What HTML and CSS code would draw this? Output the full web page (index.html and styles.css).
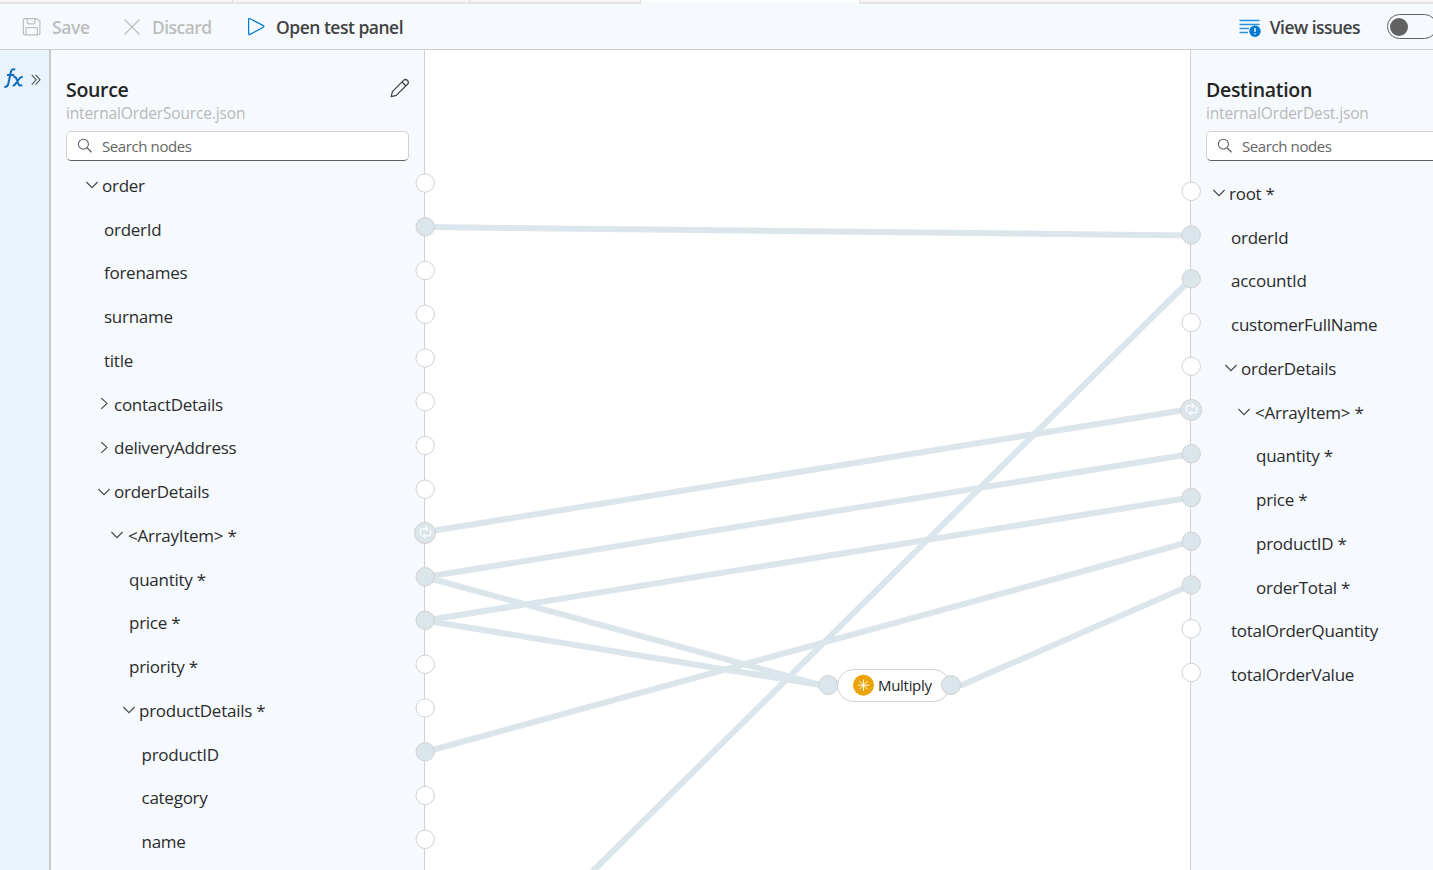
FILE: index.html
```html
<!DOCTYPE html>
<html lang="en">
<head>
<meta charset="utf-8">
<title>Data mapper</title>
<link rel="stylesheet" href="styles.css">
</head>
<body>
<svg class="defs" width="0" height="0">
  <symbol id="down" viewBox="0 0 12 12"><path d="M0.4 3 6 8.7 11.6 3" fill="none" stroke="#484644" stroke-width="1.1"/></symbol>
  <symbol id="right" viewBox="0 0 12 12"><path d="M3.2 0 9 5.4 3.2 10.8" fill="none" stroke="#484644" stroke-width="1.1"/></symbol>
  <symbol id="search" viewBox="0 0 16 16"><circle cx="6.4" cy="6.2" r="5" fill="none" stroke="#616161" stroke-width="1.1"/><path d="M10 9.8 14.6 14.3" stroke="#616161" stroke-width="1.2"/></symbol>
  <symbol id="loop" viewBox="0 0 14 14"><path d="M8.5 2.9H4.3Q1.3 2.9 1.3 5.8V7.4Q1.3 8.8 2.5 9.7M5.5 10.7H9.7Q12.7 10.7 12.7 7.8V6.2Q12.7 4.8 11.5 3.9M7.3 .6 9.6 2.9 7.3 5.2M6.7 8.4 4.4 10.7 6.7 13" fill="none" stroke="#fff" stroke-width="1.3"/></symbol>
</svg>
<div class="app">
  <div class="tabs"><i class="tab t1"></i><i class="tab t2"></i><i class="tab t3"></i><i class="tab active"></i><i class="tab rest"></i></div>
  <header class="toolbar">
    <button class="cmd save disabled"><svg width="20" height="20" viewBox="0 0 20 20" fill="none" stroke="#bdbdbd" stroke-width="1.2"><path d="M3.2 1.6H14.6L17.9 4.6V15.8Q17.9 17.9 15.8 17.9H3.4Q1.3 17.9 1.3 15.8V3.5Q1.3 1.6 3.2 1.6ZM5.2 1.6V5.8Q5.2 6.8 6.2 6.8H12Q13 6.8 13 5.8V1.6M4 17.9V11.6Q4 10.6 5 10.6H14.3Q15.3 10.6 15.3 11.6V17.9"/></svg><span>Save</span></button>
    <button class="cmd discard disabled"><svg width="16" height="16" viewBox="0 0 16 16" stroke="#bdbdbd" stroke-width="1.2"><path d="M.5 .5 15.5 15.5M15.5 .5 .5 15.5"/></svg><span>Discard</span></button>
    <button class="cmd test"><svg width="18" height="20" viewBox="0 0 18 20" fill="none" stroke="#0078d4" stroke-width="1.2" stroke-linejoin="round"><path d="M1.6 2.6Q1.6 1 3.1 1.7L16.3 8.6Q17.4 9.4 16.3 10.2L3.1 17.4Q1.6 18 1.6 16.4Z"/></svg><span>Open test panel</span></button>
    <button class="cmd issues"><svg width="23" height="20" viewBox="0 0 23 20"><path d="M.5 3.5H20.5M.5 7.5H20.5M.5 11.5H10M.5 15.5H9" stroke="#2b91df" stroke-width="1.4"/><circle cx="16" cy="14.2" r="5.7" fill="#0078d4"/><path d="M16 11V15M16 16.2V17.6" stroke="#fff" stroke-width="1.4"/></svg><span>View issues</span></button>
    <span class="toggle"><i></i></span>
  </header>
  <main class="body">
    <nav class="rail">
      <svg width="20" height="22" viewBox="0 0 20 22" fill="none" stroke="#0f6cbd" stroke-width="2"><path d="M.3 18.8Q3.4 19.4 4.3 15.8L6.8 4.2Q7.5 .6 11.2 1.4M3 7H10.3M9.4 9Q11.6 8.2 12.6 11.2L14.3 15.8Q15 18.2 18.3 17.4M18.7 9Q17 8.6 15.4 10.5L11.5 15.8Q10.3 18 8.7 17.4"/></svg>
      <svg width="10" height="12" viewBox="0 0 10 12" fill="none" stroke="#555" stroke-width="1.1"><path d="M.8 .9 5.2 5.8 .8 10.7M4.6 .9 9 5.8 4.6 10.7"/></svg>
    </nav>
    <section class="panel source">
      <div class="head"><h2 class="title t-source">Source</h2><svg width="20" height="20" viewBox="0 0 20 20" fill="none" stroke="#424242" stroke-width="1.25" stroke-linejoin="round"><path d="M1.2 18.7 2.4 13.6 13.5 2.4Q15.4 .6 17.3 2.3 19.3 4.3 17.5 6.3L6.3 17.4ZM12 4 16 8"/></svg></div>
      <p class="file f-source">internalOrderSource.json</p>
      <div class="search"><svg width="16" height="16"><use href="#search"/></svg><span>Search nodes</span></div>
      <div class="tree">
        <div class="row s0"><svg width="12" height="12"><use href="#down"/></svg><span>order</span></div>
        <div class="row s1"><span>orderId</span></div>
        <div class="row s1"><span>forenames</span></div>
        <div class="row s1"><span>surname</span></div>
        <div class="row s1"><span>title</span></div>
        <div class="row s1 branch"><svg width="12" height="12"><use href="#right"/></svg><span>contactDetails</span></div>
        <div class="row s1 branch"><svg width="12" height="12"><use href="#right"/></svg><span>deliveryAddress</span></div>
        <div class="row s1 branch"><svg width="12" height="12"><use href="#down"/></svg><span>orderDetails</span></div>
        <div class="row s2 branch array"><svg width="12" height="12"><use href="#down"/></svg><span>&lt;ArrayItem&gt; *</span></div>
        <div class="row s2"><span>quantity *</span></div>
        <div class="row s2"><span>price *</span></div>
        <div class="row s2"><span>priority *</span></div>
        <div class="row s3 branch"><svg width="12" height="12"><use href="#down"/></svg><span>productDetails *</span></div>
        <div class="row s3"><span>productID</span></div>
        <div class="row s3"><span>category</span></div>
        <div class="row s3"><span>name</span></div>
      </div>
    </section>
    <section class="canvas"></section>
    <section class="panel dest">
      <div class="head"><h2 class="title t-dest">Destination</h2></div>
      <p class="file f-dest">internalOrderDest.json</p>
      <div class="search"><svg width="16" height="16"><use href="#search"/></svg><span>Search nodes</span></div>
      <div class="tree">
        <div class="row d0"><svg width="12" height="12"><use href="#down"/></svg><span>root *</span></div>
        <div class="row d1"><span>orderId</span></div>
        <div class="row d1"><span>accountId</span></div>
        <div class="row d1"><span>customerFullName</span></div>
        <div class="row d1 branch"><svg width="12" height="12"><use href="#down"/></svg><span>orderDetails</span></div>
        <div class="row d2 branch array"><svg width="12" height="12"><use href="#down"/></svg><span>&lt;ArrayItem&gt; *</span></div>
        <div class="row d2"><span>quantity *</span></div>
        <div class="row d2"><span>price *</span></div>
        <div class="row d2"><span>productID *</span></div>
        <div class="row d2"><span>orderTotal *</span></div>
        <div class="row d1"><span>totalOrderQuantity</span></div>
        <div class="row d1"><span>totalOrderValue</span></div>
      </div>
    </section>
  </main>
  <svg class="wires" width="1433" height="870" viewBox="0 0 1433 870">
    <g class="wire">
      <path d="M425 227 1191 235.5M1191 279 592 872M425 532 1191 409M425 577 1191 454M425 620.5 1191 497.5M425 577 820 685H828M425 620.5 820 685H828M425 752 1191 541.5M951 685H962L1191 585"/>
    </g>
    <g class="port">
      <circle cx="425.2" cy="183" r="9.2"/><circle cx="425.2" cy="270.5" r="9.2"/><circle cx="425.2" cy="314.3" r="9.2"/><circle cx="425.2" cy="358" r="9.2"/><circle cx="425.2" cy="401.8" r="9.2"/><circle cx="425.2" cy="445.5" r="9.2"/><circle cx="425.2" cy="489.2" r="9.2"/><circle cx="425.2" cy="664.3" r="9.2"/><circle cx="425.2" cy="708" r="9.2"/><circle cx="425.2" cy="795.5" r="9.2"/><circle cx="425.2" cy="839.3" r="9.2"/>
      <circle cx="1191.2" cy="191.3" r="9.2"/><circle cx="1191.2" cy="322.5" r="9.2"/><circle cx="1191.2" cy="366.3" r="9.2"/><circle cx="1191.2" cy="628.8" r="9.2"/><circle cx="1191.2" cy="672.5" r="9.2"/>
    </g>
    <rect x="837.5" y="669.5" width="112" height="32" rx="16" fill="#fff" stroke="#d1d1d1"/>
    <g class="port linked">
      <circle cx="425.2" cy="226.8" r="9.2"/><circle cx="425" cy="533" r="10.5"/><circle cx="425.2" cy="576.8" r="9.2"/><circle cx="425.2" cy="620.3" r="9.2"/><circle cx="425.2" cy="751.8" r="9.2"/>
      <circle cx="1191.2" cy="235" r="9.2"/><circle cx="1191.2" cy="278.8" r="9.2"/><circle cx="1191.2" cy="410" r="10.5"/><circle cx="1191.2" cy="453.8" r="9.2"/><circle cx="1191.2" cy="497.5" r="9.2"/><circle cx="1191.2" cy="541.3" r="9.2"/><circle cx="1191.2" cy="585" r="9.2"/>
      <circle cx="828.3" cy="685" r="9.5"/><circle cx="951" cy="685" r="9.5"/>
    </g>
    <use href="#loop" x="419" y="526" width="13" height="13"/>
    <use href="#loop" x="1185" y="403" width="13" height="13"/>
    <circle cx="863.5" cy="685.2" r="10.5" fill="#eaa300"/>
    <path d="M863.5 679.6V690.8M857.9 685.2H869.1M859.5 681.2 867.5 689.2M867.5 681.2 859.5 689.2" stroke="#fff" stroke-width="1"/>
    <text class="fn" x="878" y="691" textLength="54">Multiply</text>
  </svg>
</div>
</body>
</html>
```
FILE: styles.css
```css
* { box-sizing: border-box; }
body { margin: 0; overflow: hidden; font-family: "Open Sans", "Noto Sans", sans-serif; color: #242424; }
.defs { display: none; }
.app { position: relative; width: 1433px; height: 870px; display: flex; flex-direction: column; overflow: hidden; background: #fff; }
.tabs { display: flex; height: 4px; flex: none; background: #f6faff; }
.tab { height: 4px; background: #f7f5f6; border-bottom: 2px solid #e3e4e8; border-right: 1px solid #e1dfe2; }
.t1 { width: 233px; }
.t2 { width: 237px; }
.t3 { width: 171px; }
.active { width: 219px; background: #fff; border-bottom-color: #f6faff; }
.rest { flex: 1; border-right: 0; }
.toolbar { display: flex; align-items: center; height: 46px; flex: none; background: #f6faff; border-bottom: 1px solid #c9cbce; padding-left: 22px; }
.cmd { display: flex; align-items: center; padding: 0; border: 0; background: none; font: 550 17.5px/24px "Open Sans", "Noto Sans", sans-serif; color: #424242; white-space: nowrap; }
.cmd svg { flex: none; }
.cmd span { position: relative; top: .5px; }
.disabled { color: #bdbdbd; }
.save { gap: 10px; width: 102px; letter-spacing: -.4px; }
.discard { gap: 12px; width: 123px; letter-spacing: -.55px; }
.test { gap: 11px; letter-spacing: -.5px; }
.issues { gap: 8px; margin-left: auto; letter-spacing: -.55px; }
.toggle { flex: none; width: 50px; height: 25px; margin: 0 -4px 0 27px; padding: 3px 2px; border: 1px solid #616161; border-radius: 13px; }
.toggle i { display: block; width: 18px; height: 18px; border-radius: 50%; background: #616161; }
.body { flex: 1; display: flex; min-height: 0; }
.rail { width: 51px; flex: none; display: flex; align-items: flex-start; gap: 7px; padding: 18px 0 0 4px; background: #e8f3fe; border-right: 2px solid #c9c9c9; }
.rail svg + svg { margin-top: 6px; }
.panel { flex: none; background: #f6faff; padding-top: 24px; overflow: hidden; }
.source { width: 374px; padding-left: 15px; border-right: 1px solid #d1d1d1; }
.dest { width: 243px; padding-left: 15px; border-left: 1px solid #d1d1d1; }
.canvas { flex: 1; background: #fff; }
.head { display: flex; align-items: center; justify-content: space-between; height: 30px; padding-right: 15px; }
.head svg { margin: -2px -1px 0 0; }
.title { margin: 2px 0 0; font-size: 19.5px; line-height: 26px; font-weight: 570; letter-spacing: -.3px; }
.file { margin: 0; height: 27px; font-size: 15.5px; line-height: 18px; font-weight: 370; color: #b8b8b8; letter-spacing: -.15px; white-space: nowrap; }
.search { display: flex; align-items: center; gap: 9px; width: 343px; height: 30px; padding-left: 10px; background: #fff; border: 1px solid #d1d1d1; border-bottom-color: #616161; border-radius: 5px; font-size: 15px; font-weight: 380; color: #666; letter-spacing: -.4px; }
.tree { padding-top: 2.5px; }
.dest .tree { padding-top: 10.5px; }
.row { display: flex; align-items: center; gap: 4px; height: 43.75px; font-size: 17px; font-weight: 370; letter-spacing: -.26px; white-space: nowrap; color: #2b2b2b; }
.row svg { flex: none; }
.s0 { padding-left: 20px; }
.s1 { padding-left: 38px; }
.s1.branch { padding-left: 32px; }
.s2 { padding-left: 63px; }
.s2.branch { padding-left: 45px; }
.s3 { padding-left: 75.5px; }
.s3.branch { padding-left: 57px; }
.array { gap: 5px; }
.d0 { padding-left: 7px; }
.d1 { padding-left: 25px; }
.d1.branch { padding-left: 19px; }
.d2 { padding-left: 50px; }
.d2.branch { padding-left: 32px; }
.wires { position: absolute; left: 0; top: 0; pointer-events: none; }
.wire { fill: none; stroke: #dbe6ec; stroke-width: 6; }
.port { fill: #fff; stroke: #d1d1d1; stroke-width: 1; }
.linked { fill: #dbe6ec; }
.fn { font-size: 15px; font-weight: 380; fill: #242424; }
```
